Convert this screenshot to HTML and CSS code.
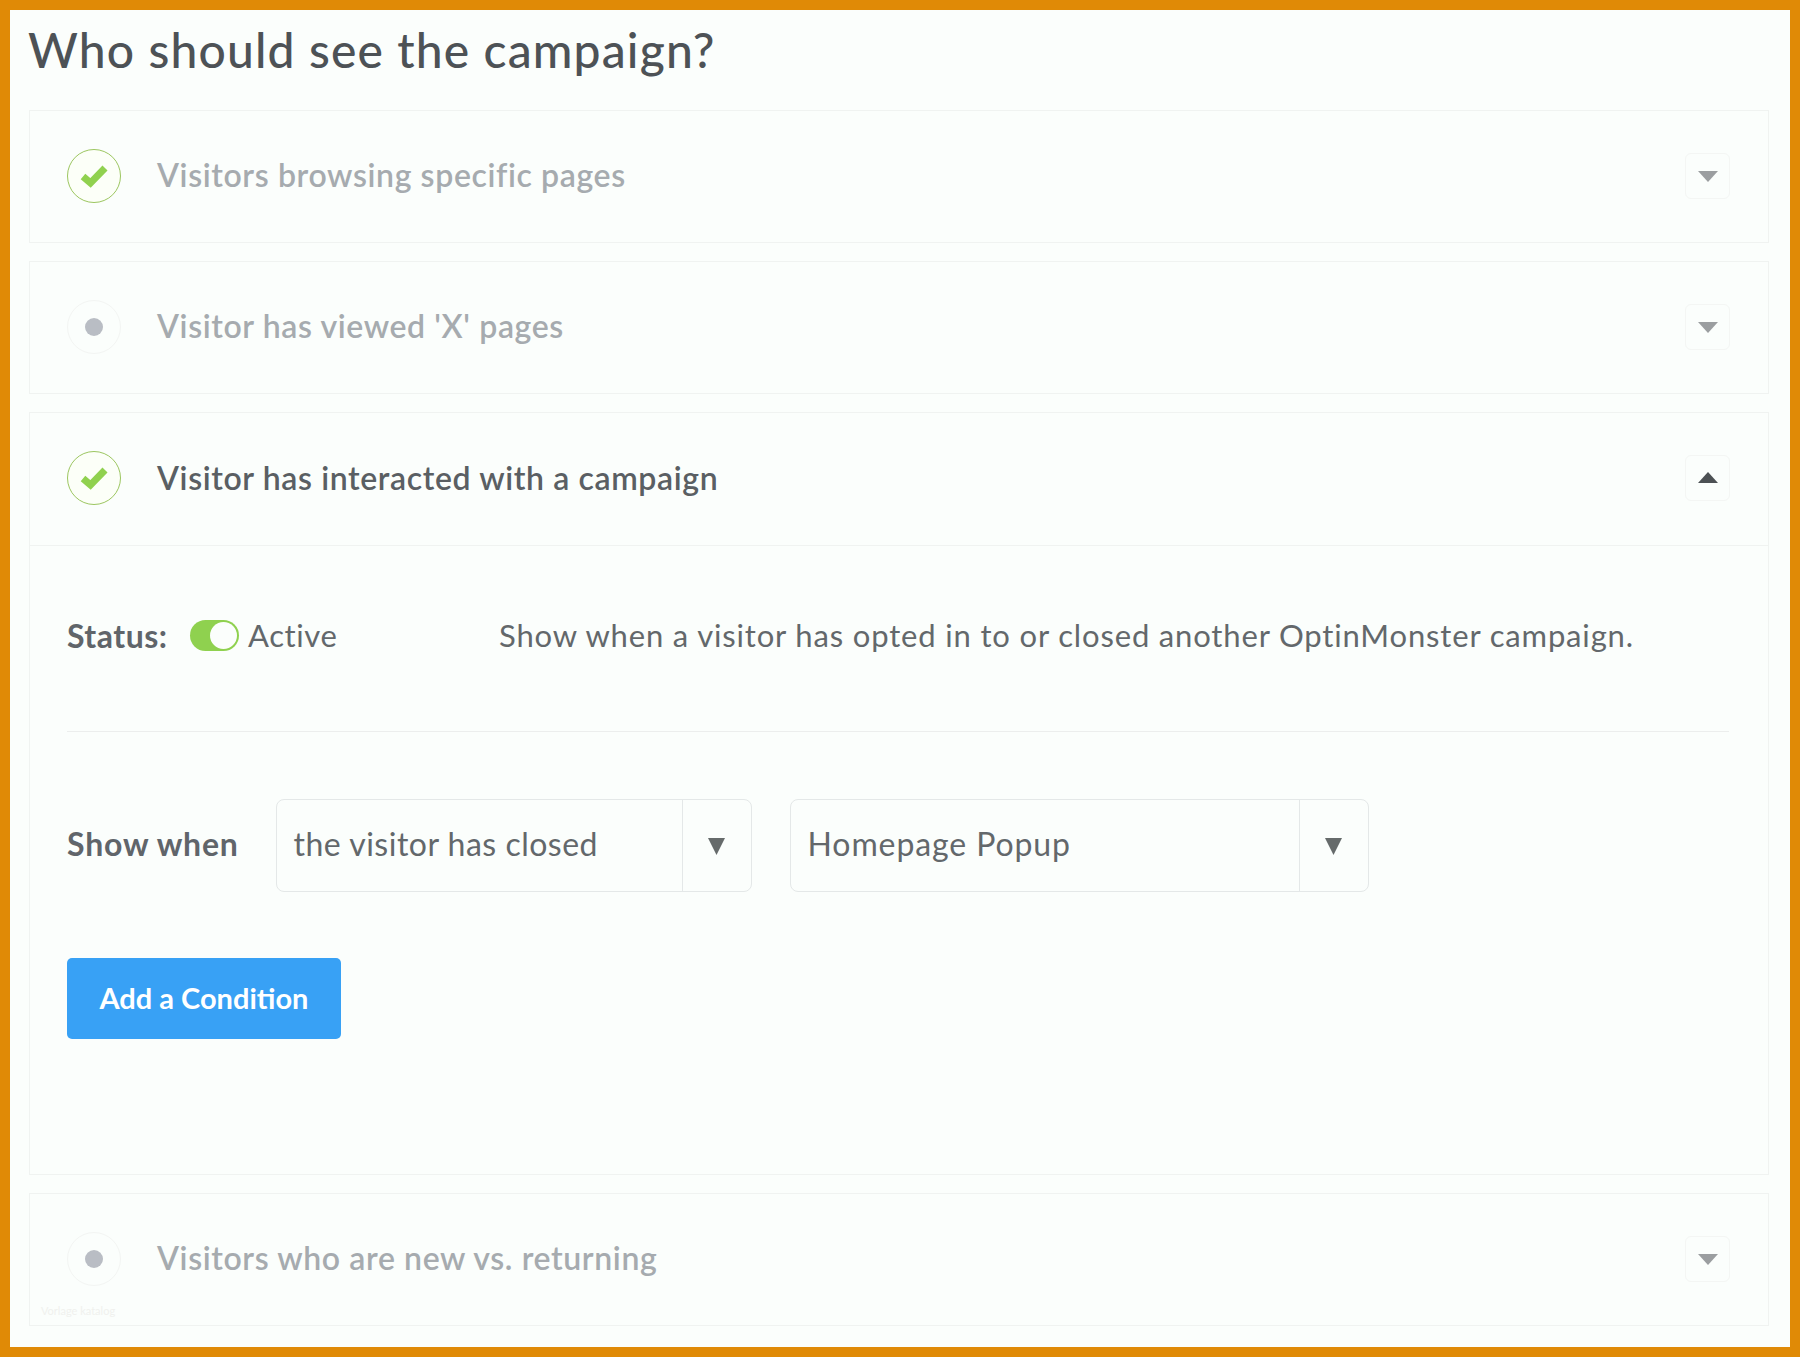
FILE: index.html
```html
<!DOCTYPE html>
<html lang="en">
<head>
<meta charset="utf-8">
<title>Who should see the campaign?</title>
<link rel="stylesheet" href="styles.css">
</head>
<body>
<main class="frame">
  <h1 class="title">Who should see the campaign?</h1>

  <section class="card">
    <header class="card-head">
      <span class="mark mark-on"><svg width="30" height="24" viewBox="0 0 30 24"><path class="tick" d="M4 12.5 11.500 19 26 4"/></svg></span>
      <h2 class="card-title muted">Visitors browsing specific pages</h2>
      <button class="caret-btn" type="button"><svg width="20" height="12" viewBox="0 0 20 12"><path class="caret-muted" d="M0 1h20L10 12z"/></svg></button>
    </header>
  </section>

  <section class="card">
    <header class="card-head">
      <span class="mark mark-off"><span class="dot"></span></span>
      <h2 class="card-title muted">Visitor has viewed 'X' pages</h2>
      <button class="caret-btn" type="button"><svg width="20" height="12" viewBox="0 0 20 12"><path class="caret-muted" d="M0 1h20L10 12z"/></svg></button>
    </header>
  </section>

  <section class="card card-open">
    <header class="card-head card-head-open">
      <span class="mark mark-on"><svg width="30" height="24" viewBox="0 0 30 24"><path class="tick" d="M4 12.5 11.500 19 26 4"/></svg></span>
      <h2 class="card-title">Visitor has interacted with a campaign</h2>
      <button class="caret-btn" type="button"><svg width="20" height="12" viewBox="0 0 20 12"><path class="caret-dark" d="M10 0l10 11H0z"/></svg></button>
    </header>
    <div class="card-body">
      <div class="status-row">
        <strong class="label status-label">Status:</strong>
        <span class="toggle"><span class="knob"></span></span>
        <span class="status-value">Active</span>
        <p class="status-desc">Show when a visitor has opted in to or closed another OptinMonster campaign.</p>
      </div>
      <div class="show-row">
        <strong class="label show-label">Show when</strong>
        <div class="select select-a">
          <span class="select-value">the visitor has closed</span>
          <span class="select-arrow"><svg width="17" height="17" viewBox="0 0 17 17"><path class="caret-select" d="M0 0h17L8.500 17z"/></svg></span>
        </div>
        <div class="select select-b">
          <span class="select-value">Homepage Popup</span>
          <span class="select-arrow"><svg width="17" height="17" viewBox="0 0 17 17"><path class="caret-select" d="M0 0h17L8.500 17z"/></svg></span>
        </div>
      </div>
      <button class="add-btn" type="button">Add a Condition</button>
    </div>
  </section>

  <section class="card card-last">
    <header class="card-head">
      <span class="mark mark-off"><span class="dot"></span></span>
      <h2 class="card-title muted">Visitors who are new vs. returning</h2>
      <button class="caret-btn" type="button"><svg width="20" height="12" viewBox="0 0 20 12"><path class="caret-muted" d="M0 1h20L10 12z"/></svg></button>
    </header>
    <span class="watermark">Vorlage katalog</span>
  </section>
</main>
</body>
</html>
```
FILE: styles.css
```css
* { box-sizing: border-box; }
html, body { margin: 0; padding: 0; }
body { font-family: Lato, "Open Sans", sans-serif; color: #51565a; background: #fbfefc; }

.frame {
  width: 1800px;
  height: 1357px;
  border: 10px solid #e08a06;
  padding: 0 21px 0 19px;
  background: #fbfefc;
  overflow: hidden;
}

.title {
  margin: 0 0 0 -1px;
  height: 100px;
  padding-top: 12px;
  font-size: 48px;
  line-height: 56px;
  font-weight: 500;
  letter-spacing: 1.14px;
  color: #4d5256;
}

.card {
  position: relative;
  border: 1px solid #f0f3f1;
  margin-bottom: 18px;
  height: 133px;
}
.card-open { height: 763px; }
.card-last { margin-bottom: 0; }

.card-head {
  display: flex;
  align-items: center;
  height: 131px;
  padding: 0 38px 2px 37px;
}
.card-head-open { height: 133px; border-bottom: 1px solid #f0f3f1; }

.mark {
  flex: none;
  width: 54px;
  height: 54px;
  border-radius: 50%;
  display: flex;
  align-items: center;
  justify-content: center;
  margin-right: 36px;
}
.mark-on { border: 1.500px solid #9cc660; background: #fcfff8; }
.mark-off { border: 1px solid #f3f5f3; }
.dot { width: 18px; height: 18px; border-radius: 50%; background: #b9bdc4; }
.tick { fill: none; stroke: #90d14f; stroke-width: 7; }

.card-title {
  flex: 1;
  margin: 0;
  padding-bottom: 1px;
  font-size: 32px;
  line-height: 40px;
  font-weight: 600;
  letter-spacing: 0.62px;
  color: #5a5f63;
}
.card-title.muted { color: #a6abaf; }

.caret-btn {
  flex: none;
  width: 45px;
  height: 46px;
  padding: 0;
  display: flex;
  align-items: center;
  justify-content: center;
  border: 1px solid #f4f6f4;
  border-radius: 6px;
  background: #fbfefc;
}
.caret-muted { fill: #9b9ea0; }
.caret-dark { fill: #4c5154; }
.caret-select { fill: #666b6b; }

.card-body { padding: 0 39px 0 37px; }

.status-row {
  display: flex;
  align-items: center;
  height: 186px;
  border-bottom: 1px solid #eceeed;
  padding-bottom: 7px;
}
.label { font-weight: 700; font-size: 32px; letter-spacing: 0.8px; color: #60656a; }
.status-label { width: 123px; letter-spacing: 0.5px; }
.toggle {
  width: 49px;
  height: 31px;
  border-radius: 16px;
  background: #8fd14f;
  display: flex;
  align-items: center;
  justify-content: flex-end;
  padding-right: 2px;
  margin-right: 9px;
}
.knob { width: 27px; height: 27px; border-radius: 50%; background: #fbfefc; }
.status-value { width: 251px; font-size: 31px; letter-spacing: 0.6px; color: #63686b; }
.status-desc { margin: 0; font-size: 31px; letter-spacing: 0.84px; color: #63686b; white-space: nowrap; }

.show-row {
  display: flex;
  align-items: center;
  margin-top: 67px;
  height: 93px;
}
.show-label { width: 208.500px; padding-bottom: 4px; }
.select {
  display: flex;
  height: 93px;
  border: 1px solid #e4e8e8;
  border-radius: 8px;
  font-size: 32px;
  letter-spacing: 0.5px;
  color: #63686b;
}
.select-a { width: 476px; margin-right: 38px; }
.select-b { width: 579px; letter-spacing: 0.9px; }
.select-value { flex: 1; padding-left: 17px; line-height: 87px; white-space: nowrap; }
.select-arrow {
  flex: none;
  width: 69px;
  padding-top: 2px;
  border-left: 1px solid #e4e8e8;
  display: flex;
  align-items: center;
  justify-content: center;
}

.add-btn {
  display: block;
  margin-top: 66px;
  width: 274px;
  height: 81px;
  padding: 0 0 2px;
  border: 0;
  border-radius: 5px;
  background: #38a1f5;
  color: #fff;
  font-family: inherit;
  font-size: 29px;
  font-weight: 700;
  letter-spacing: 0;
}

.watermark {
  position: absolute;
  left: 11px;
  bottom: 8px;
  font-size: 11px;
  color: #f0f1ee;
}
```
